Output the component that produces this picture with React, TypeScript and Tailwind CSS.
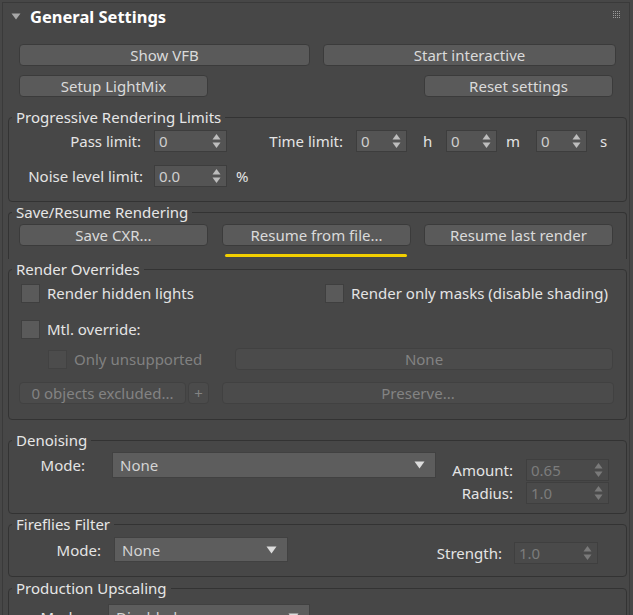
import React from "react";

const FONT = { fontFamily: '"Noto Sans", "Open Sans", "Liberation Sans", sans-serif' };

// ─── Small pieces ────────────────────────────────────────────────────────────

function Btn({
  label,
  w,
  disabled = false,
  className = "",
}: {
  label: string;
  w: string;
  disabled?: boolean;
  className?: string;
}) {
  return (
    <div
      className={
        "h-[22px] shrink-0 rounded-[4px] border flex items-center justify-center text-[15px] leading-none " +
        (disabled
          ? "bg-[#4b4b4b] border-[#414141] text-[#838383] "
          : "bg-[#5a5a5a] border-[#3b3b3b] text-[#dadada] ") +
        w +
        " " +
        className
      }
    >
      {label}
    </div>
  );
}

function Arrows({ disabled = false }: { disabled?: boolean }) {
  const c = disabled ? "#7a7a7a" : "#bdbdbd";
  return (
    <svg width="9" height="16" viewBox="0 0 9 16" className="shrink-0">
      <path d="M4.5 1 L8.5 6.5 L0.5 6.5 Z" fill={c} />
      <path d="M4.5 15 L8.5 9.5 L0.5 9.5 Z" fill={c} />
    </svg>
  );
}

function Spinner({
  value,
  w,
  disabled = false,
}: {
  value: string;
  w: string;
  disabled?: boolean;
}) {
  return (
    <div
      className={
        "h-[22px] shrink-0 border flex items-center justify-between pl-[4px] pr-[5px] text-[15px] " +
        (disabled
          ? "bg-[#4a4a4a] border-[#3f3f3f] text-[#7c7c7c] "
          : "bg-[#545454] border-[#3d3d3d] text-[#cfcfcf] ") +
        w
      }
    >
      <span>{value}</span>
      <Arrows disabled={disabled} />
    </div>
  );
}

function Dropdown({ value, w, h }: { value: string; w: string; h: string }) {
  return (
    <div
      className={
        "shrink-0 border border-[#414141] bg-[#5d5d5d] flex items-center justify-between pl-[7px] pr-[10px] text-[15px] text-[#d4d4d4] " +
        w +
        " " +
        h
      }
    >
      <span>{value}</span>
      <svg width="11" height="8" viewBox="0 0 11 8">
        <path d="M0.5 0.5 L10.5 0.5 L5.5 7.5 Z" fill="#dcdcdc" />
      </svg>
    </div>
  );
}

function Check({ label, disabled = false }: { label: string; disabled?: boolean }) {
  return (
    <div className="flex items-center gap-[7px] h-[20px]">
      <div
        className={
          "w-[19px] h-[19px] shrink-0 border " +
          (disabled ? "bg-[#4c4c4c] border-[#424242]" : "bg-[#5a5a5a] border-[#3f3f3f]")
        }
      />
      <span className={"text-[15px] " + (disabled ? "text-[#818181]" : "text-[#e4e4e4]")}>
        {label}
      </span>
    </div>
  );
}

function Group({
  title,
  children,
  className = "",
}: {
  title: string;
  children: React.ReactNode;
  className?: string;
}) {
  return (
    <fieldset
      className={"ml-[5px] w-[619px] border border-[#333333] rounded-[4px] " + className}
    >
      <legend className="ml-[3px] px-[4px] text-[15px] leading-[20px] text-[#e6e6e6]">
        {title}
      </legend>
      <div className="pl-[10px]">{children}</div>
    </fieldset>
  );
}

// ─── Panel ──────────────────────────────────────────────────────────────────

export default function App() {
  return (
    <div
      className="w-[633px] h-[615px] overflow-hidden bg-[#474747] text-[#e4e4e4] text-[15px] leading-[20px]"
      style={FONT}
    >
      <div className="ml-[2px] mt-[2px] w-[628px] h-[640px] border-l border-t border-r border-[#3a3a3a]">
        {/* Header */}
        <div className="h-[28px] flex items-center relative">
          <svg width="10" height="7" viewBox="0 0 10 7" className="ml-[8px] mt-[-2px]">
            <path d="M0.5 0.5 L9.5 0.5 L5 6.5 Z" fill="#a8a8a8" />
          </svg>
          <span className="ml-[9px] text-[16.5px] font-bold text-white">General Settings</span>
          <div className="absolute right-[9px] top-[8px] grid grid-cols-4 gap-[1px]">
            {Array.from({ length: 16 }).map((_, i) => (
              <span key={i} className="w-[1px] h-[1px] bg-[#9a9a9a]" />
            ))}
          </div>
        </div>

        {/* Top buttons */}
        <div className="mt-[13px] pl-[16px] flex gap-[13px]">
          <Btn label="Show VFB" w="w-[291px]" />
          <Btn label="Start interactive" w="w-[293px]" />
        </div>
        <div className="mt-[9px] pl-[16px] flex">
          <Btn label="Setup LightMix" w="w-[189px]" />
          <Btn label="Reset settings" w="w-[189px]" className="ml-[216px]" />
        </div>

        {/* Progressive Rendering Limits */}
        <Group title="Progressive Rendering Limits" className="h-[95px] mt-[10px]">
          <div className="mt-[3px] flex items-center">
            <span className="w-[122px] text-right">Pass limit:</span>
            <div className="ml-[13px]">
              <Spinner value="0" w="w-[73px]" />
            </div>
            <span className="ml-[37px] w-[79px] text-right">Time limit:</span>
            <div className="ml-[13px]">
              <Spinner value="0" w="w-[51px]" />
            </div>
            <span className="w-[39px] pl-[16px]">h</span>
            <Spinner value="0" w="w-[51px]" />
            <span className="w-[39px] pl-[9px]">m</span>
            <Spinner value="0" w="w-[51px]" />
            <span className="pl-[13px]">s</span>
          </div>
          <div className="mt-[13px] flex items-center">
            <span className="w-[124px] text-right">Noise level limit:</span>
            <div className="ml-[11px]">
              <Spinner value="0.0" w="w-[73px]" />
            </div>
            <span className="ml-[9px]">%</span>
          </div>
        </Group>

        {/* Save/Resume Rendering */}
        <Group title="Save/Resume Rendering" className="h-[57px] border-b-0 rounded-b-none">
          <div className="mt-[2px] flex">
            <Btn label="Save CXR..." w="w-[189px]" />
            <div className="ml-[14px] flex flex-col">
              <Btn label="Resume from file..." w="w-[189px]" />
              <div className="mt-[8px] ml-[3px] w-[182px] h-[3px] rounded-full bg-[#f2cf00]" />
            </div>
            <Btn label="Resume last render" w="w-[189px]" className="ml-[13px]" />
          </div>
        </Group>

        {/* Render Overrides */}
        <Group title="Render Overrides" className="h-[161px]">
          <div className="mt-[4px] flex items-center">
            <div className="ml-[2px] w-[304px]">
              <Check label="Render hidden lights" />
            </div>
            <Check label="Render only masks (disable shading)" />
          </div>
          <div className="mt-[16px] ml-[2px]">
            <Check label="Mtl. override:" />
          </div>
          <div className="mt-[9px] flex items-center">
            <div className="ml-[29px] w-[187px]">
              <Check label="Only unsupported" disabled />
            </div>
            <Btn label="None" w="w-[378px]" disabled />
          </div>
          <div className="mt-[12px] flex">
            <Btn label="0 objects excluded..." w="w-[167px]" disabled />
            <Btn label="+" w="w-[21px]" disabled className="ml-[2px]" />
            <Btn label="Preserve..." w="w-[392px]" disabled className="ml-[13px]" />
          </div>
        </Group>

        {/* Denoising */}
        <Group title="Denoising" className="h-[84px] mt-[10px]">
          <div className="mt-[2px] flex items-start">
            <div className="flex items-center">
              <span className="w-[66px] text-right">Mode:</span>
              <div className="ml-[27px]">
                <Dropdown value="None" w="w-[324px]" h="h-[26px]" />
              </div>
            </div>
            <div className="ml-[5px] mt-[7px] flex flex-col gap-[1px]">
              <div className="flex items-center">
                <span className="w-[72px] text-right">Amount:</span>
                <div className="ml-[13px]">
                  <Spinner value="0.65" w="w-[83px]" disabled />
                </div>
              </div>
              <div className="flex items-center">
                <span className="w-[72px] text-right">Radius:</span>
                <div className="ml-[13px]">
                  <Spinner value="1.0" w="w-[83px]" disabled />
                </div>
              </div>
            </div>
          </div>
        </Group>

        {/* Fireflies Filter */}
        <Group title="Fireflies Filter" className="h-[63px]">
          <div className="mt-[3px] flex items-start">
            <div className="flex items-center">
              <span className="w-[82px] text-right">Mode:</span>
              <div className="ml-[13px]">
                <Dropdown value="None" w="w-[174px]" h="h-[25px]" />
              </div>
            </div>
            <div className="ml-[137px] mt-[5px] flex items-center">
              <span className="w-[77px] text-right">Strength:</span>
              <div className="ml-[12px]">
                <Spinner value="1.0" w="w-[84px]" disabled />
              </div>
            </div>
          </div>
        </Group>

        {/* Production Upscaling */}
        <Group title="Production Upscaling" className="h-[60px] mt-[1px]">
          <div className="mt-[6px] flex items-center">
            <span className="w-[66px] text-right">Mode:</span>
            <div className="ml-[23px]">
              <Dropdown value="Disabled" w="w-[202px]" h="h-[26px]" />
            </div>
          </div>
        </Group>
      </div>
    </div>
  );
}
